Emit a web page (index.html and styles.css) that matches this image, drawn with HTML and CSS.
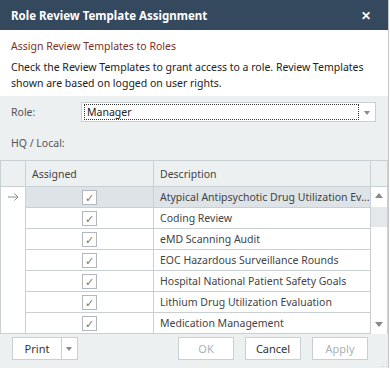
FILE: index.html
```html
<!doctype html>
<html lang="en">
<head>
<meta charset="UTF-8">
<title>Role Review Template Assignment</title>
<link rel="stylesheet" href="styles.css">
</head>
<body>
<div class="dialog">
	<div class="titlebar"><span class="title">Role Review Template Assignment</span><span class="close">&#x2715;</span></div>
	<div class="intro">
		<h1>Assign Review Templates to Roles</h1>
		<p>Check the Review Templates to grant access to a role. Review Templates shown are based on logged on user rights.</p>
	</div>
	<div class="form">
		<div class="field"><label>Role:</label><div class="combo"><span class="combo_val">Manager</span><span class="combo_btn"></span></div></div>
		<div class="field hq"><label>HQ / Local:</label></div>
		<table class="grid">
			<colgroup><col class="c_ind"><col class="c_chk"><col class="c_desc"><col class="c_scr"></colgroup>
			<thead><tr><th></th><th>Assigned</th><th>Description</th><th></th></tr></thead>
			<tbody>
				<tr class="sel"><td class="ind"><svg width="11" height="8" viewBox="0 0 11 8"><path d="M0 4h10M6.5 0.5L10 4 6.5 7.5" fill="none" stroke="#8a8f93" stroke-width="1"/></svg></td><td class="chk"><span class="box">&#x2713;</span></td><td class="desc">Atypical Antipsychotic Drug Utilization Ev...</td><td class="scr" rowspan="7"><div class="vscroll"><span class="arr up"></span><span class="track"><span class="thumb"></span></span><span class="arr down"></span></div></td></tr>
				<tr><td class="ind"></td><td class="chk"><span class="box">&#x2713;</span></td><td class="desc">Coding Review</td></tr>
				<tr><td class="ind"></td><td class="chk"><span class="box">&#x2713;</span></td><td class="desc">eMD Scanning Audit</td></tr>
				<tr><td class="ind"></td><td class="chk"><span class="box">&#x2713;</span></td><td class="desc">EOC Hazardous Surveillance Rounds</td></tr>
				<tr><td class="ind"></td><td class="chk"><span class="box">&#x2713;</span></td><td class="desc">Hospital National Patient Safety Goals</td></tr>
				<tr><td class="ind"></td><td class="chk"><span class="box">&#x2713;</span></td><td class="desc">Lithium Drug Utilization Evaluation</td></tr>
				<tr><td class="ind"></td><td class="chk"><span class="box">&#x2713;</span></td><td class="desc">Medication Management</td></tr>
			</tbody>
		</table>
		<div class="footer">
			<div class="split"><span class="split_main">Print</span><span class="split_arr"></span></div>
			<div class="actions">
				<span class="btn off">OK</span>
				<span class="btn">Cancel</span>
				<span class="btn off">Apply</span>
			</div>
			<span class="grip"></span>
		</div>
	</div>
</div>
</body>
</html>
```
FILE: styles.css
```css
html,body {margin: 0;padding: 0;background: #fff;}
body {font-family: "Noto Sans", "Open Sans", sans-serif;font-size: 10.5px;color: #333;}

.dialog {position: relative;width: 388px;height: 368px;overflow: hidden;border-right: 1px solid #c6c6c6;display: flex;flex-direction: column;}

/* 标题栏 */
.titlebar {height: 30px;flex: none;background: #35495e;color: #fff;display: flex;align-items: center;justify-content: space-between;padding: 0 17px 0 11px;}
.title {font-weight: bold;font-size: 11.5px;}
.close {font-size: 12px;font-weight: bold;}

/* 说明 */
.intro {background: #fff;padding: 8px 11px 5px;}
.intro h1 {margin: 0 0 5px;font-size: 10.5px;font-weight: normal;line-height: 16px;color: #7e2f1f;}
.intro p {margin: 0;line-height: 16px;color: #222;}

/* 表单区 */
.form {flex: 1;background: #edf0f1;padding-top: 6px;display: flex;flex-direction: column;}
.field {display: flex;align-items: center;padding: 0 11px;height: 20px;}
.field label {width: 70px;color: #555;}
.field.hq {margin-top: 13px;height: 16px;}
.combo {flex: none;width: 293px;height: 18px;border: 1px solid #c9d0d4;background: #fff;display: flex;align-items: center;}
.combo_val {flex: 1;margin: 0 0 0 2px;height: 14px;line-height: 14px;border: 1px dotted #333;padding-left: 2px;color: #222;}
.combo_btn {width: 16px;height: 18px;position: relative;}
.combo_btn:after {content: "";position: absolute;left: 5px;top: 8px;border: 3.5px solid transparent;border-top: 4px solid #8a8a8a;border-bottom: 0;}

/* 网格 */
.grid {margin-top: 9px;width: 387px;border-collapse: collapse;table-layout: fixed;}
.grid col.c_ind {width: 25px;}
.grid col.c_chk {width: 128px;}
.grid col.c_desc {width: 217px;}
.grid col.c_scr {width: 17px;}
.grid th {height: 25px;padding: 0 6px;text-align: left;font-weight: normal;color: #444;border: 1px solid #c9d0d4;}
.grid td {height: 20px;padding: 0;border: 1px solid #c9d0d4;background: #fff;color: #444;white-space: nowrap;overflow: hidden;}
.grid td.ind {text-align: center;line-height: 0;border-top: none;border-bottom: none;}
.grid td.ind svg {display: inline-block;margin-left: 1px;}
.grid tr:last-child td.ind {border-bottom: 1px solid #c9d0d4;}
.grid td.chk {text-align: center;}
.grid td.desc {padding-left: 6px;text-overflow: ellipsis;}
.grid tr.sel td.chk,
.grid tr.sel td.desc {background: #dde3e6;}
.box {display: inline-block;width: 13px;height: 13px;border: 1px solid #b0b8bd;background: #fff;vertical-align: middle;line-height: 13px;font-size: 11px;color: #777;text-align: center;}
.grid td.scr {vertical-align: top;padding: 0;border-bottom: 0;}
.vscroll {display: flex;flex-direction: column;height: 146px;}
.arr {height: 17px;flex: none;position: relative;}
.arr:after {content: "";position: absolute;left: 4px;top: 6px;border: 4px solid transparent;}
.arr.up:after {border-top: 0;border-bottom: 5px solid #8a8a8a;}
.arr.down:after {border-bottom: 0;border-top: 5px solid #8a8a8a;}
.track {flex: 1;}
.thumb {display: block;height: 20px;margin-top: 3px;background: #e4e8ea;}

/* 底部按钮 */
.footer {position: relative;flex: 1;display: flex;align-items: flex-start;justify-content: space-between;padding: 3px 20px 0 12px;}
.split {display: flex;height: 21px;border: 1px solid #c9d0d4;background: #fff;}
.split_main {width: 48px;line-height: 21px;text-align: center;border-right: 1px solid #c9d0d4;color: #333;font-size: 11px;}
.split_arr {width: 15px;position: relative;}
.split_arr:after {content: "";position: absolute;left: 4px;top: 9px;border: 3.5px solid transparent;border-top: 4px solid #8a8a8a;border-bottom: 0;}
.actions {display: flex;gap: 11px;}
.btn {width: 54px;height: 21px;line-height: 21px;text-align: center;border: 1px solid #c9d0d4;background: #fff;color: #333;font-size: 11px;}
.btn.off {color: #aab2b6;}
.grip {position: absolute;right: 1px;bottom: 1px;width: 7px;height: 7px;background: radial-gradient(circle, #b8bfc3 40%, transparent 45%) 0 0 / 2.5px 2.5px;clip-path: polygon(100% 0, 100% 100%, 0 100%);}
```
